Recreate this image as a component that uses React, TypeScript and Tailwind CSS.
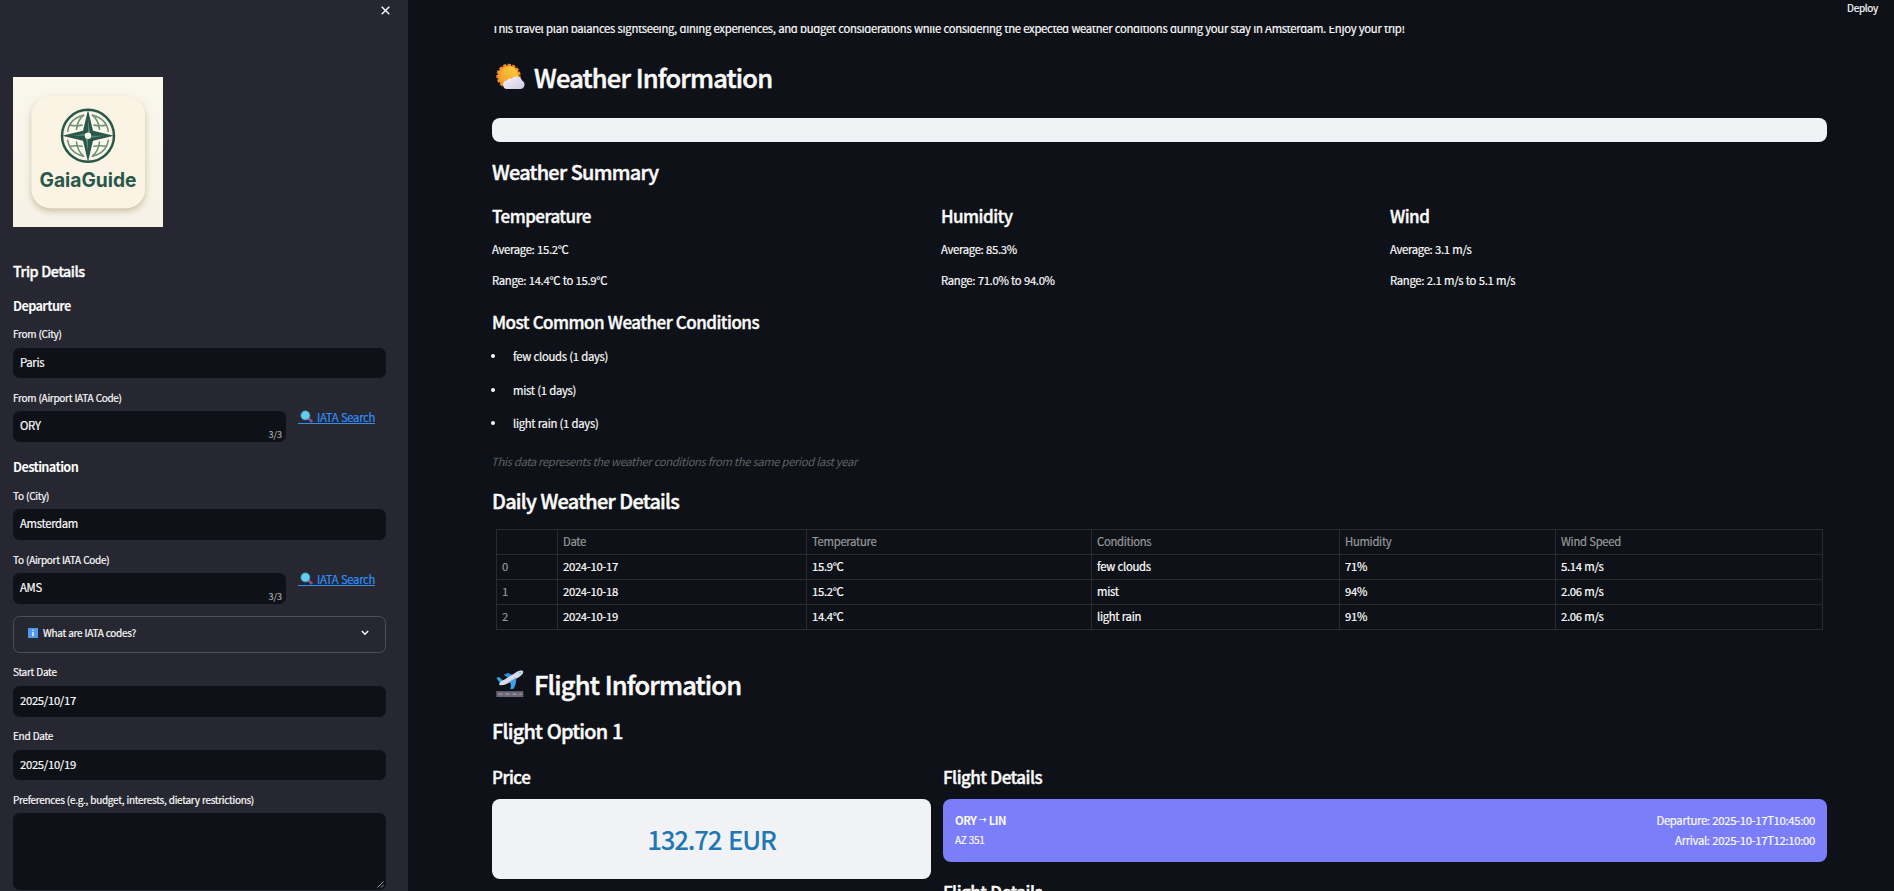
import type { ReactNode } from "react";

const H2 = "flex h-[34px] items-center text-[25.5px] leading-[34px] font-medium tracking-[-0.84px] [word-spacing:0.8px] whitespace-nowrap [-webkit-text-stroke:0.5px]";
const H3 = "h-7 text-[19.9px] leading-7 font-medium tracking-[-0.74px] [word-spacing:0.7px] whitespace-nowrap [-webkit-text-stroke:0.45px]";
const H4 = "h-6 text-[17px] leading-6 font-medium tracking-[-0.52px] [word-spacing:0.4px] whitespace-nowrap [-webkit-text-stroke:0.4px]";
const BODY = "text-[11.3px] leading-5 tracking-[-0.312px] [word-spacing:0.35px] whitespace-nowrap [-webkit-text-stroke:0.2px]";
const LABEL = "h-4 text-[10px] leading-4 tracking-[-0.3px] [word-spacing:0.4px] whitespace-nowrap [-webkit-text-stroke:0.2px]";

function Logo() {
  const grid = (
    <g fill="none" stroke="#6b9378" strokeWidth="1.6" strokeLinecap="round">
      <path d="M4.5 -20.5 C13 -18.5 19 -13 20.3 -4.5" />
      <path d="M4.5 -20.5 C9.5 -16 11 -11 11.5 -6.3" />
      <path d="M6 -10.6 C10 -9.8 14 -9.8 18 -10.6" />
    </g>
  );
  return (
    <svg width="150" height="150" viewBox="0 0 150 150" className="block">
      <defs>
        <filter id="cardShadow" x="-20%" y="-20%" width="140%" height="150%">
          <feDropShadow dx="0" dy="3" stdDeviation="3.2" floodColor="#9c8660" floodOpacity="0.5" />
        </filter>
        <linearGradient id="paper" x1="0" y1="0" x2="0" y2="1">
          <stop offset="0" stopColor="#faf7ec" />
          <stop offset="1" stopColor="#f7f2e6" />
        </linearGradient>
      </defs>
      <rect width="150" height="150" fill="url(#paper)" />
      <rect x="18.5" y="19" width="113.5" height="112.3" rx="19" fill="#fbf3e3" filter="url(#cardShadow)" />
      <g transform="translate(75 58.7)">
        <circle r="26" fill="#fbf6e9" stroke="#29574a" strokeWidth="2.5" />
        {grid}
        <g transform="scale(-1 1)">{grid}</g>
        <g transform="scale(1 -1)">{grid}</g>
        <g transform="scale(-1 -1)">{grid}</g>
        <path d="M0 -26 L5 -5 L26 0 L5 5 L0 26 L-5 5 L-26 0 L-5 -5 Z" fill="#29574a" />
        <path d="M0 -16 L2 -3 L0 0 Z M0 16 L-2 3 L0 0 Z M16 0 L3 2 L0 0 Z M-16 0 L-3 -2 L0 0 Z" fill="#5d8a72" />
        <circle r="3.2" fill="#fdf9ee" />
      </g>
      <text x="26.5" y="110" textLength="97" lengthAdjust="spacingAndGlyphs" fontFamily="Inter, sans-serif" fontWeight="650" fontSize="19.8" fill="#29574a">
        GaiaGuide
      </text>
    </svg>
  );
}

function SunCloud() {
  return (
    <svg width="28" height="26" viewBox="0 0 28 26" className="ml-1 mr-[10px] block overflow-visible">
      <defs>
        <linearGradient id="sun" x1="1" y1="0" x2="0" y2="1">
          <stop offset="0" stopColor="#ffd43a" />
          <stop offset="1" stopColor="#f0972c" />
        </linearGradient>
        <linearGradient id="cloud" x1="0" y1="0" x2="1" y2="1">
          <stop offset="0" stopColor="#f6f5fa" />
          <stop offset="1" stopColor="#cfc9e0" />
        </linearGradient>
      </defs>
      <circle cx="12.5" cy="12" r="11.2" fill="none" stroke="#f58a2c" strokeWidth="2" strokeDasharray="3.2 1.49" />
      <circle cx="12.5" cy="12" r="10.8" fill="#f8932b" />
      <circle cx="12.8" cy="11.4" r="9.2" fill="url(#sun)" />
      <path d="M11 25 A4.3 4.3 0 0 1 10.6 16.5 A4.6 4.6 0 0 1 15.6 14.8 A6 6 0 0 1 26 16.5 A4.5 4.5 0 0 1 23.5 25 Z" fill="url(#cloud)" />
    </svg>
  );
}

function Takeoff() {
  return (
    <svg width="28" height="28" viewBox="0 0 28 28" className="ml-1 mr-[10px] block overflow-visible">
      <rect x="0.3" y="21.2" width="27" height="5.8" fill="#6c6875" />
      <path d="M2.5 24.1 H25.5" stroke="#a09cab" strokeWidth="1.3" strokeDasharray="4 3" />
      <path d="M7.5 4.8 L12 3 L18.5 5.8 L13 8.5 Z" fill="#2f8fd6" />
      <path d="M0.3 8 L3 7 L7.5 11 L4.5 13.4 Z" fill="#3ba0e6" />
      <path d="M3 14.2 C3.5 12 6 11 8.5 9.6 L20.5 2 C23 0.5 27 -0.2 27.3 1.8 C27.6 4 24.5 6.2 22 7.8 L12 13.2 C8.5 15.2 4 16 3 14.2 Z" fill="#dcd9e6" />
      <path d="M13.5 11.8 L20.3 7.6 C20.3 12 19.8 15 17.6 18.8 L14.2 19.2 C15.4 16 15 14.5 13.5 11.8 Z" fill="#3a9fe6" />
      <path d="M22.5 2.4 L25.6 1.4 L26 2.8 L23.6 4 Z" fill="#63dcec" />
    </svg>
  );
}

function Magnifier() {
  return (
    <svg width="13" height="13" viewBox="0 0 13 13" className="mr-[4px] ml-[2px] block">
      <path d="M8.8 8.8 L11.4 11.2" stroke="#8a4f96" strokeWidth="2.6" strokeLinecap="round" />
      <circle cx="5.4" cy="5.4" r="4.6" fill="#62cdee" stroke="#3f7d96" strokeWidth="0.6" />
    </svg>
  );
}

function Field({ value, tall, count }: { value: string; tall?: boolean; count?: boolean }) {
  return (
    <div className={`${tall ? "h-[31px] pb-[3px]" : "h-[30px] pb-[2px]"} relative flex items-center rounded-[6.5px] bg-[#0e1117] px-[7px] ${BODY}`}>
      {value}
      {count && <span className="absolute right-[4px] bottom-0 text-[9px] leading-[14px] tracking-normal text-[#a3a4a8]">3/3</span>}
    </div>
  );
}

function AirportRow({ value }: { value: string }) {
  return (
    <div className="mt-[5px] flex">
      <div className="w-[273px]">
        <Field value={value} tall count />
      </div>
      <a className={`ml-3 -mt-px flex h-[14px] items-center border-b border-[#2f8ff5] text-[#2f8ff5] ${BODY}`}>
        <Magnifier />
        IATA Search
      </a>
    </div>
  );
}

function Stat({ title, lines }: { title: string; lines: string[] }) {
  return (
    <div>
      <h4 className={H4}>{title}</h4>
      {lines.map((l) => (
        <p key={l} className={`mt-[11px] ${BODY}`}>{l}</p>
      ))}
    </div>
  );
}

const head = ["", "Date", "Temperature", "Conditions", "Humidity", "Wind Speed"];
const rows = [
  ["0", "2024-10-17", "15.9°C", "few clouds", "71%", "5.14 m/s"],
  ["1", "2024-10-18", "15.2°C", "mist", "94%", "2.06 m/s"],
  ["2", "2024-10-19", "14.4°C", "light rain", "91%", "2.06 m/s"],
];

function Row({ cells, header }: { cells: string[]; header?: boolean }) {
  return (
    <div className="grid h-[25px] grid-cols-[61px_249px_285px_248px_216px_1fr] border-b border-[#292b31]">
      {cells.map((c, i) => (
        <div key={i} className={`flex items-center border-r border-[#292b31] pb-[2px] pl-[5px] ${BODY} ${header || i === 0 ? "text-[#97989b]" : "text-white"}`}>
          {c}
        </div>
      ))}
    </div>
  );
}

function Bullet({ children }: { children: ReactNode }) {
  return (
    <li className={`flex items-center ${BODY}`}>
      <span className="mr-[18px] -ml-px block h-1 w-1 rounded-full bg-[#fafafa]" />
      {children}
    </li>
  );
}

export default function App() {
  return (
    <div className="flex h-[891px] w-[1894px] overflow-hidden bg-[#0e1117] font-['Noto_Sans_CJK_SC',sans-serif] text-[#fafafa]">
      <aside className="h-full w-[408px] shrink-0 overflow-hidden bg-[#262730] pr-[22px] pl-[13px]">
        <div className="flex h-[77px] justify-end pt-[6px]">
          <svg width="9" height="9" viewBox="0 0 9 9" className="-mr-1 block">
            <path d="M0.7 0.7 L8.3 8.3 M8.3 0.7 L0.7 8.3" stroke="#fafafa" strokeWidth="1.4" />
          </svg>
        </div>
        <Logo />
        <h3 className="mt-8 h-6 text-[14.3px] leading-6 font-medium tracking-[-0.47px] [word-spacing:0.4px] [-webkit-text-stroke:0.4px]">Trip Details</h3>
        <h4 className="mt-[13px] h-5 text-[12.7px] leading-5 font-bold tracking-[-0.65px]">Departure</h4>
        <p className={`mt-[10px] ${LABEL}`}>From (City)</p>
        <div className="mt-[6px]"><Field value="Paris" /></div>
        <p className={`mt-3 ${LABEL}`}>From (Airport IATA Code)</p>
        <AirportRow value="ORY" />
        <h4 className="mt-[15px] h-5 text-[12.7px] leading-5 font-bold tracking-[-0.65px]">Destination</h4>
        <p className={`mt-[11px] ${LABEL}`}>To (City)</p>
        <div className="mt-[5px]"><Field value="Amsterdam" tall /></div>
        <p className={`mt-3 ${LABEL}`}>To (Airport IATA Code)</p>
        <AirportRow value="AMS" />
        <div className="mt-3 flex h-[37px] items-center rounded-[6.5px] border border-[#4c4d56] pr-4 pb-[3px] pl-[14px]">
          <svg width="10" height="10" viewBox="0 0 10 10" className="mr-[5px] block">
            <rect width="10" height="10" fill="#4d9bf0" />
            <path d="M5 1.8 V3 M5 4 V8.2" stroke="#fff" strokeWidth="1.3" />
          </svg>
          <span className={LABEL}>What are IATA codes?</span>
          <svg width="8" height="6" viewBox="0 0 8 6" className="ml-auto block">
            <path d="M0.8 1 L4 4.2 L7.2 1" fill="none" stroke="#fafafa" strokeWidth="1.4" />
          </svg>
        </div>
        <p className={`mt-[11px] ${LABEL}`}>Start Date</p>
        <div className="mt-[6px]"><Field value="2025/10/17" tall /></div>
        <p className={`mt-[11px] ${LABEL}`}>End Date</p>
        <div className="mt-[6px]"><Field value="2025/10/19" /></div>
        <p className={`mt-3 ${LABEL}`}>Preferences (e.g., budget, interests, dietary restrictions)</p>
        <div className="mt-[5px] flex h-[77px] items-end justify-end rounded-[6.5px] bg-[#0e1117] pr-[2px] pb-[2px]">
          <svg width="7" height="7" viewBox="0 0 7 7" className="block">
            <path d="M0.5 6.5 L6.5 0.5 M4 6.5 L6.5 4" stroke="#c8c8ca" strokeWidth="0.8" />
          </svg>
        </div>
      </aside>

      <div className="flex min-w-0 flex-1 flex-col">
        <header className="flex h-[26px] shrink-0 justify-end pr-4">
          <span className={LABEL}>Deploy</span>
        </header>
        <main className="min-h-0 flex-1 overflow-hidden pr-[67px] pl-[84px]">
          <p className={`-mt-2 ${BODY}`}>
            This travel plan balances sightseeing, dining experiences, and budget considerations while considering the expected weather conditions during your stay in Amsterdam. Enjoy your trip!
          </p>
          <h2 className={`mt-[22px] ${H2}`}><SunCloud />Weather Information</h2>
          <div className="mt-6 h-6 rounded-lg bg-[#f0f2f6]" />
          <h3 className={`mt-4 ${H3}`}>Weather Summary</h3>
          <div className="mt-[18px] grid grid-cols-[449px_449px_1fr]">
            <Stat title="Temperature" lines={["Average: 15.2°C", "Range: 14.4°C to 15.9°C"]} />
            <Stat title="Humidity" lines={["Average: 85.3%", "Range: 71.0% to 94.0%"]} />
            <Stat title="Wind" lines={["Average: 3.1 m/s", "Range: 2.1 m/s to 5.1 m/s"]} />
          </div>
          <h4 className={`mt-5 ${H4}`}>Most Common Weather Conditions</h4>
          <ul className="mt-3 flex h-[87px] flex-col justify-between">
            <Bullet>few clouds (1 days)</Bullet>
            <Bullet>mist (1 days)</Bullet>
            <Bullet>light rain (1 days)</Bullet>
          </ul>
          <p className="mt-[18px] -ml-px text-[11.3px] leading-5 tracking-[-0.39px] whitespace-nowrap text-[#606164] italic [word-spacing:0.2px]">
            This data represents the weather conditions from the same period last year
          </p>
          <h3 className={`mt-4 ${H3}`}>Daily Weather Details</h3>
          <div className="mt-[14px] mr-1 ml-1 border-t border-l border-[#292b31]">
            <Row cells={head} header />
            {rows.map((r) => (
              <Row key={r[0]} cells={r} />
            ))}
          </div>
          <h2 className={`mt-[37px] ${H2}`}><Takeoff />Flight Information</h2>
          <h3 className={`mt-4 ${H3}`}>Flight Option 1</h3>
          <div className="mt-5 grid grid-cols-[439px_1fr] gap-3">
            <div>
              <h4 className={H4}>Price</h4>
              <div className="mt-[10px] flex h-20 items-center justify-center rounded-lg bg-[#f0f2f6] text-[25.8px] leading-[34px] font-medium tracking-[-1.2px] text-[#1f77b4] [word-spacing:2px]">
                132.72 EUR
              </div>
            </div>
            <div>
              <h4 className={H4}>Flight Details</h4>
              <div className={`mt-[10px] flex h-[63px] justify-between rounded-lg bg-[#7a7ff9] px-3 pt-[11px] ${BODY}`}>
                <div>
                  <p className="h-5 font-bold tracking-[-0.5px] [-webkit-text-stroke:0px]">ORY <span className="inline-block align-top text-[8px]">→</span> LIN</p>
                  <p className="text-[10px] leading-[19px] tracking-[-0.28px]">AZ 351</p>
                </div>
                <div className="text-right">
                  <p>Departure: 2025-10-17T10:45:00</p>
                  <p>Arrival: 2025-10-17T12:10:00</p>
                </div>
              </div>
              <h4 className={`mt-[18px] ${H4}`}>Flight Details</h4>
            </div>
          </div>
        </main>
      </div>
    </div>
  );
}
